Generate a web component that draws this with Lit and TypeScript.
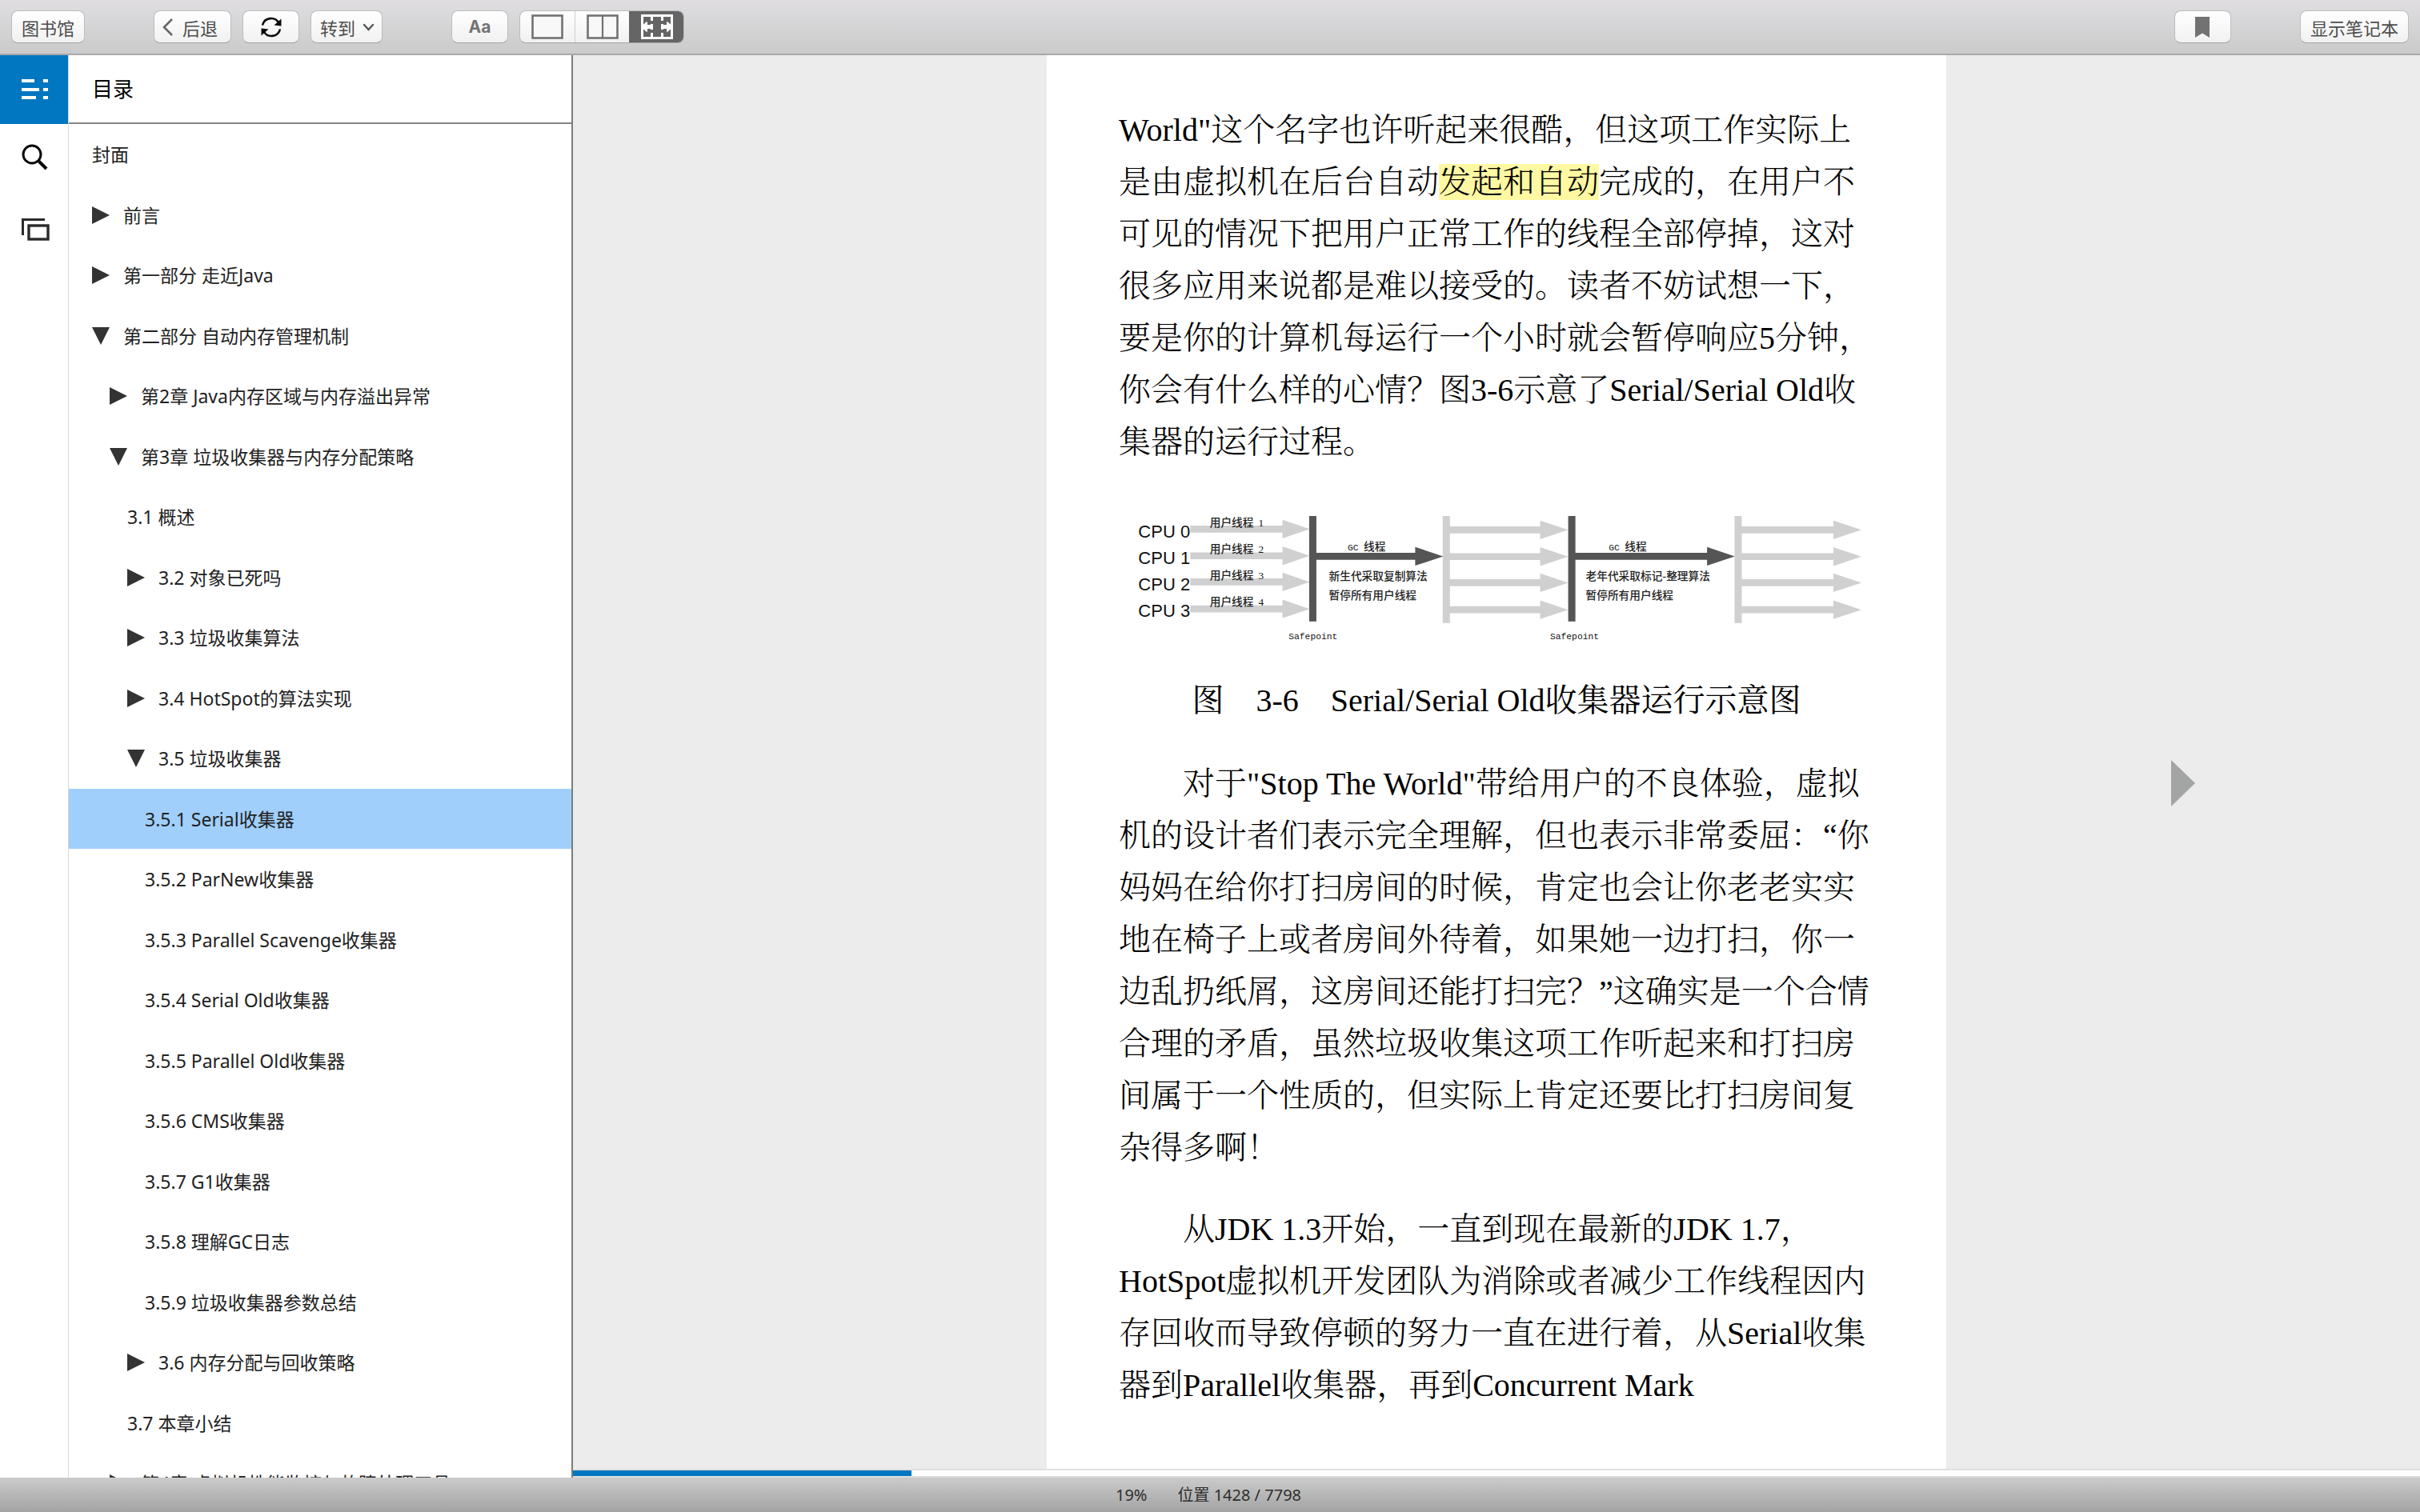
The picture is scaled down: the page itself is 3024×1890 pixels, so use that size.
import { LitElement, html, svg, css, nothing } from "lit";
import { customElement, property, state } from "lit/decorators.js";
import { classMap } from "lit/directives/class-map.js";
import { styleMap } from "lit/directives/style-map.js";

type Mark = "none" | "closed" | "open";
interface Entry {
  level: 0 | 1 | 2 | 3;
  mark: Mark;
  text: string;
}

const ENTRIES: Entry[] = [
  { level: 0, mark: "none", text: "封面" },
  { level: 0, mark: "closed", text: "前言" },
  { level: 0, mark: "closed", text: "第一部分 走近Java" },
  { level: 0, mark: "open", text: "第二部分 自动内存管理机制" },
  { level: 1, mark: "closed", text: "第2章 Java内存区域与内存溢出异常" },
  { level: 1, mark: "open", text: "第3章 垃圾收集器与内存分配策略" },
  { level: 2, mark: "none", text: "3.1 概述" },
  { level: 2, mark: "closed", text: "3.2 对象已死吗" },
  { level: 2, mark: "closed", text: "3.3 垃圾收集算法" },
  { level: 2, mark: "closed", text: "3.4 HotSpot的算法实现" },
  { level: 2, mark: "open", text: "3.5 垃圾收集器" },
  { level: 3, mark: "none", text: "3.5.1 Serial收集器" },
  { level: 3, mark: "none", text: "3.5.2 ParNew收集器" },
  { level: 3, mark: "none", text: "3.5.3 Parallel Scavenge收集器" },
  { level: 3, mark: "none", text: "3.5.4 Serial Old收集器" },
  { level: 3, mark: "none", text: "3.5.5 Parallel Old收集器" },
  { level: 3, mark: "none", text: "3.5.6 CMS收集器" },
  { level: 3, mark: "none", text: "3.5.7 G1收集器" },
  { level: 3, mark: "none", text: "3.5.8 理解GC日志" },
  { level: 3, mark: "none", text: "3.5.9 垃圾收集器参数总结" },
  { level: 2, mark: "closed", text: "3.6 内存分配与回收策略" },
  { level: 2, mark: "none", text: "3.7 本章小结" },
  { level: 1, mark: "closed", text: "第4章 虚拟机性能监控与故障处理工具" },
];

const buttonReset = css`
  * {
    box-sizing: border-box;
  }
  button {
    font: inherit;
    color: inherit;
    margin: 0;
    padding: 0;
    border: 0;
    background: none;
  }
  svg {
    display: block;
  }
`;

@customElement("reader-toolbar")
export class ReaderToolbar extends LitElement {
  @state() private view = 2;

  static styles = [
    buttonReset,
    css`
      :host {
        box-sizing: border-box;
        display: flex;
        align-items: center;
        gap: 86px;
        height: 69px;
        padding: 0 14px;
        border-bottom: 2px solid #a9a8aa;
        background: linear-gradient(#dfdde0, #cbcbcb);
        font-family: "Noto Sans CJK SC", sans-serif;
        font-size: 22px;
        line-height: 32px;
        color: #4d4d4d;
      }
      .group {
        display: flex;
        gap: 14px;
      }
      .end {
        margin-left: auto;
      }
      .btn,
      .views {
        display: flex;
        align-items: center;
        justify-content: center;
        height: 41px;
        border: 1px solid #bdbcbe;
        border-bottom-color: #a4a3a5;
        border-radius: 8px;
        background: linear-gradient(#ffffff, #f1f1f1);
        white-space: nowrap;
      }
      .btn {
        min-width: 71px;
        padding: 0 12px;
      }
      .back {
        gap: 12px;
        padding: 0 16px 0 10px;
      }
      .goto {
        gap: 9px;
        padding: 0 9px 0 11px;
      }
      .aa {
        font: 700 21px "Inter", sans-serif;
        color: #747474;
      }
      .views {
        overflow: hidden;
      }
      .view {
        display: grid;
        place-items: center;
        width: 68px;
        height: 41px;
        border-left: 1px solid #cfcfcf;
      }
      .view:first-child {
        border-left: 0;
      }
      .view.on {
        background: #656565;
        border-color: #656565;
      }
    `,
  ];

  render() {
    const icons = [
      svg`<rect x="1.5" y="1.5" width="37" height="28" fill="#f8f8f8" stroke="#727272" stroke-width="2.6"/>`,
      svg`<rect x="1.5" y="1.5" width="37" height="28" fill="#f8f8f8" stroke="#727272" stroke-width="2.6"/>
          <path d="M20 1V30" stroke="#727272" stroke-width="2.2"/>`,
      svg`<rect width="40" height="31" fill="#fff"/>
          <g fill="#656565">
            <rect x="15" y="3" width="10" height="25"/>
            <path d="M3 3H12V13H8V9L3 13ZM3 28H12V18H8V22L3 18ZM37 3H28V13H32V9L37 13ZM37 28H28V18H32V22L37 18Z"/>
            <rect x="12" y="8" width="3" height="4"/>
            <rect x="12" y="19" width="3" height="4"/>
            <rect x="25" y="8" width="3" height="4"/>
            <rect x="25" y="19" width="3" height="4"/>
          </g>
          <path d="M0 15.500L7 9V13H15V18H7V22ZM40 15.500L33 9V13H25V18H33V22Z" fill="#fff"/>`,
    ];
    const names = ["单栏", "双栏", "自动"];
    return html`
      <div class="group"><button class="btn">图书馆</button></div>
      <div class="group">
        <button class="btn back">
          <svg width="13" height="22" viewBox="0 0 13 22" fill="none" stroke="#666" stroke-width="2.6">
            <path d="M12 1L2 11L12 21" />
          </svg>
          后退
        </button>
        <button class="btn" aria-label="刷新">
          <svg width="28" height="28" viewBox="0 0 28 28">
            <g fill="none" stroke="#0b0b0b" stroke-width="2.6">
              <path d="M3 11.500A11 11 0 0 1 23.500 9" />
              <path d="M25 16.500A11 11 0 0 1 4.500 19" />
            </g>
            <path d="M26.500 3.500V12.500L17.500 11.500ZM1.500 24.500V15.500L10.500 16.500Z" fill="#0b0b0b" />
          </svg>
        </button>
        <button class="btn goto" aria-haspopup="menu">
          转到
          <svg width="15" height="12" viewBox="0 0 15 12" fill="none" stroke="#555" stroke-width="2.4" stroke-linecap="round">
            <path d="M2 3L7.500 9L13 3" />
          </svg>
        </button>
      </div>
      <div class="group">
        <button class="btn aa">Aa</button>
        <div class="views">
          ${icons.map(
            (icon, i) => html`<button
              class=${classMap({ view: true, on: this.view === i })}
              aria-label=${names[i]}
              aria-pressed=${this.view === i ? "true" : "false"}
              @click=${() => (this.view = i)}
            >
              <svg width="40" height="31" viewBox="0 0 40 31">${icon}</svg>
            </button>`
          )}
        </div>
      </div>
      <button class="btn end" aria-label="书签">
        <svg width="18" height="26" viewBox="0 0 18 26">
          <path d="M0 0H18V26L9 20.500L0 26Z" fill="#727272" />
        </svg>
      </button>
      <button class="btn">显示笔记本</button>
    `;
  }
}

@customElement("reader-rail")
export class ReaderRail extends LitElement {
  static styles = [
    buttonReset,
    css`
      :host {
        display: block;
        border-right: 1px solid #d9d9d9;
        background: #fff;
      }
      .tab {
        display: grid;
        place-items: center;
        width: 100%;
        height: 86px;
      }
      .tab.on {
        background: #0277c1;
      }
    `,
  ];

  render() {
    return html`
      <button class="tab on" aria-label="目录">
        <svg width="44" height="44" viewBox="0 0 44 44">
          <path
            fill="#fff"
            d="M6 9H22V13H6ZM33 9H39V13H33ZM6 20H28V24H6ZM33 20H39V24H33ZM6 30H24V34H6ZM33 30H39V34H33Z"
          />
        </svg>
      </button>
      <button class="tab" aria-label="搜索">
        <svg width="44" height="44" viewBox="0 0 44 44" fill="none" stroke="#0a0a0a">
          <circle cx="19" cy="17" r="11" stroke-width="3" />
          <path d="M26.500 24.500L37 35" stroke-width="4" />
        </svg>
      </button>
      <button class="tab" aria-label="卡片">
        <svg width="44" height="44" viewBox="0 0 44 44" fill="none" stroke="#2b2b2b" stroke-width="3">
          <path d="M35 12.500H7.500V32" />
          <rect x="15" y="20" width="24" height="17" stroke-width="3.4" />
        </svg>
      </button>
    `;
  }
}

@customElement("reader-contents")
export class ReaderContents extends LitElement {
  @state() private selected = 11;

  static styles = [
    buttonReset,
    css`
      :host {
        display: flex;
        flex-direction: column;
        min-height: 0;
        border-right: 2px solid #7d7d7d;
        background: #fff;
        font-family: "Noto Sans", "Noto Sans CJK SC", sans-serif;
      }
      .title {
        flex: none;
        height: 86px;
        margin: 0;
        padding: 0 29px;
        border-bottom: 2px solid #858585;
        font-size: 26px;
        font-weight: 400;
        line-height: 84px;
        color: #000;
      }
      .list {
        flex: 1;
        min-height: 0;
        margin: 0;
        padding: 0;
        overflow: hidden;
        list-style: none;
      }
      .row {
        display: flex;
        align-items: center;
        gap: 17px;
        height: 76px;
        padding-right: 16px;
        font-size: 23px;
        line-height: 32px;
        color: #222;
        white-space: nowrap;
      }
      .row:nth-child(even) {
        height: 75px;
      }
      .l0 {
        padding-left: 29px;
      }
      .l1 {
        padding-left: 51px;
      }
      .l2 {
        padding-left: 73px;
      }
      .l3 {
        padding-left: 95px;
      }
      .row.on {
        background: #a0cffb;
      }
      a {
        color: inherit;
        text-decoration: none;
      }
    `,
  ];

  render() {
    return html`
      <h2 class="title">目录</h2>
      <ul class="list">
        ${ENTRIES.map(
          (e, i) => html`<li class=${classMap({ row: true, [`l${e.level}`]: true, on: i === this.selected })}>
            ${e.mark === "none"
              ? nothing
              : html`<button aria-label=${e.text} aria-expanded=${e.mark === "open" ? "true" : "false"}>
                  <svg width="22" height="22" viewBox="0 0 22 22">
                    <path d=${e.mark === "open" ? "M0 0H22L11 22Z" : "M0 0V22L22 11Z"} fill="#333" />
                  </svg>
                </button>`}
            <a href="#" @click=${(ev: Event) => this.pick(ev, i)}>${e.text}</a>
          </li>`
        )}
      </ul>
    `;
  }

  private pick(ev: Event, i: number) {
    ev.preventDefault();
    this.selected = i;
  }
}

@customElement("gc-figure")
export class GcFigure extends LitElement {
  static styles = css`
    :host {
      display: block;
    }
    svg {
      display: block;
      width: 100%;
    }
    .cpu {
      font: 66px "Liberation Sans", sans-serif;
      fill: #111;
    }
    .note {
      font: 500 41px "Noto Sans CJK SC", sans-serif;
      fill: #222;
    }
    .digit {
      font: 40px "Liberation Serif", serif;
      fill: #111;
    }
    .mono {
      font: 34px "Liberation Mono", monospace;
      fill: #111;
    }
    .light {
      fill: #d0d0d0;
    }
    .dark {
      fill: #555;
    }
  `;

  private arrow(cls: string, x1: number, neck: number, tip: number, y: number) {
    return svg`<path class=${cls} d="M${x1} ${y - 13}H${neck}V${y - 35}L${tip} ${y}L${neck} ${y + 35}V${y + 13}H${x1}Z"/>`;
  }

  render() {
    const ys = [125, 225, 323, 424];
    return html`
      <svg viewBox="57 36 2829 576" role="img" aria-label="Serial/Serial Old">
        ${ys.map(
          (y, i) => svg`
            ${this.arrow("light", 325, 670, 772, y - 1)}
            ${this.arrow("light", 1290, 1635, 1740, y + 2)}
            ${this.arrow("light", 2385, 2733, 2838, y + 2)}
            <text class="cpu" x="130" y=${155 + i * 99}>CPU ${i}</text>
            <text class="note" x="398" y=${113 + i * 99}>用户线程</text>
            <text class="digit" x="580" y=${113 + i * 99}>${i + 1}</text>`
        )}
        <rect class="light" x="1270" y="75" width="27" height="401" />
        <rect class="light" x="2363" y="75" width="27" height="401" />
        <rect class="dark" x="770" y="75" width="27" height="395" />
        <rect class="dark" x="1740" y="75" width="27" height="395" />
        ${this.arrow("dark", 790, 1167, 1272, 226)} ${this.arrow("dark", 1760, 2260, 2364, 226)}
        <text class="mono" x="914" y="204">GC</text>
        <text class="note" x="974" y="204">线程</text>
        <text class="note" x="844" y="316">新生代采取复制算法</text>
        <text class="note" x="844" y="387">暂停所有用户线程</text>
        <text class="mono" x="693" y="537">Safepoint</text>
        <text class="mono" x="1892" y="204">GC</text>
        <text class="note" x="1952" y="204">线程</text>
        <text class="note" x="1806" y="316">老年代采取标记-整理算法</text>
        <text class="note" x="1806" y="387">暂停所有用户线程</text>
        <text class="mono" x="1672" y="537">Safepoint</text>
      </svg>
    `;
  }
}

@customElement("reader-page")
export class ReaderPage extends LitElement {
  static styles = [
    buttonReset,
    css`
      :host {
        display: grid;
        grid-template-columns: 1fr minmax(0, 1124px) 1fr;
        min-height: 0;
        overflow: hidden;
        background: #ececec;
      }
      .page {
        grid-column: 2;
        padding: 61px 90px 0;
        overflow: hidden;
        background: #fff;
        font-family: "Liberation Serif", "Noto Serif CJK SC", "Noto Sans CJK SC", serif;
        font-size: 40px;
        font-weight: 300;
        line-height: 65px;
        color: #000;
      }
      p {
        margin: 0 0 37px;
        white-space: nowrap;
      }
      .indent {
        text-indent: 2em;
      }
      .figure {
        margin: 47px 0 39px;
      }
      .caption {
        margin-top: 19px;
        font-weight: 400;
        text-align: center;
        white-space: nowrap;
      }
      mark {
        color: inherit;
        background: #fff8a3;
      }
      .next {
        place-self: center;
        margin-top: 52px;
      }
    `,
  ];

  render() {
    return html`
      <article class="page">
        <p>
          World"这个名字也许听起来很酷，但这项工作实际上<br />是由虚拟机在后台自动<mark>发起和自动</mark>完成的，在用户不<br />可见的情况下把用户正常工作的线程全部停掉，这对<br />很多应用来说都是难以接受的。读者不妨试想一下，<br />要是你的计算机每运行一个小时就会暂停响应5分钟，<br />你会有什么样的心情？图3-6示意了Serial/Serial Old收<br />集器的运行过程。
        </p>
        <figure class="figure">
          <gc-figure></gc-figure>
          <figcaption class="caption">图　3-6　Serial/Serial Old收集器运行示意图</figcaption>
        </figure>
        <p class="indent">
          对于"Stop The World"带给用户的不良体验，虚拟<br />机的设计者们表示完全理解，但也表示非常委屈：“你<br />妈妈在给你打扫房间的时候，肯定也会让你老老实实<br />地在椅子上或者房间外待着，如果她一边打扫，你一<br />边乱扔纸屑，这房间还能打扫完？”这确实是一个合情<br />合理的矛盾，虽然垃圾收集这项工作听起来和打扫房<br />间属于一个性质的，但实际上肯定还要比打扫房间复<br />杂得多啊！
        </p>
        <p class="indent">
          从JDK 1.3开始，一直到现在最新的JDK 1.7，<br />HotSpot虚拟机开发团队为消除或者减少工作线程因内<br />存回收而导致停顿的努力一直在进行着，从Serial收集<br />器到Parallel收集器，再到Concurrent Mark
        </p>
      </article>
      <button class="next" aria-label="下一页">
        <svg width="30" height="58" viewBox="0 0 30 58"><path d="M0 0L30 29L0 58Z" fill="#a3a5a5" /></svg>
      </button>
    `;
  }
}

@customElement("reader-progress")
export class ReaderProgress extends LitElement {
  @property({ type: Number }) value = 0;
  @property({ type: Number }) max = 1;

  static styles = css`
    :host {
      display: block;
      border-top: 2px solid #e0e0e0;
      border-bottom: 2px solid #dcdcdc;
      background: #fff;
    }
    .bar {
      height: 7px;
      background: #0277c1;
    }
  `;

  render() {
    const width = `${(this.value / this.max) * 100}%`;
    return html`<div class="bar" style=${styleMap({ width })}></div>`;
  }
}

@customElement("app-root")
export class AppRoot extends LitElement {
  private location = 1428;
  private total = 7798;

  static styles = css`
    :host {
      display: grid;
      grid-template-rows: auto minmax(0, 1fr) auto;
      height: 100vh;
      overflow: hidden;
    }
    .body {
      display: grid;
      grid-template-columns: 86px 630px minmax(0, 1fr);
      min-height: 0;
    }
    .main {
      display: grid;
      grid-template-rows: minmax(0, 1fr) auto;
      min-height: 0;
    }
    .status {
      display: flex;
      justify-content: center;
      gap: 38px;
      height: 43px;
      padding-right: 4px;
      background: linear-gradient(#cbcbcb, #a3a3a3);
      font-family: "Noto Sans", "Noto Sans CJK SC", sans-serif;
      font-size: 20px;
      line-height: 43px;
      color: #2e2e2e;
    }
  `;

  render() {
    return html`
      <reader-toolbar></reader-toolbar>
      <div class="body">
        <reader-rail></reader-rail>
        <reader-contents></reader-contents>
        <div class="main">
          <reader-page></reader-page>
          <reader-progress .value=${this.location} .max=${this.total}></reader-progress>
        </div>
      </div>
      <footer class="status">
        <span>19%</span>
        <span>位置 ${this.location} / ${this.total}</span>
      </footer>
    `;
  }
}
